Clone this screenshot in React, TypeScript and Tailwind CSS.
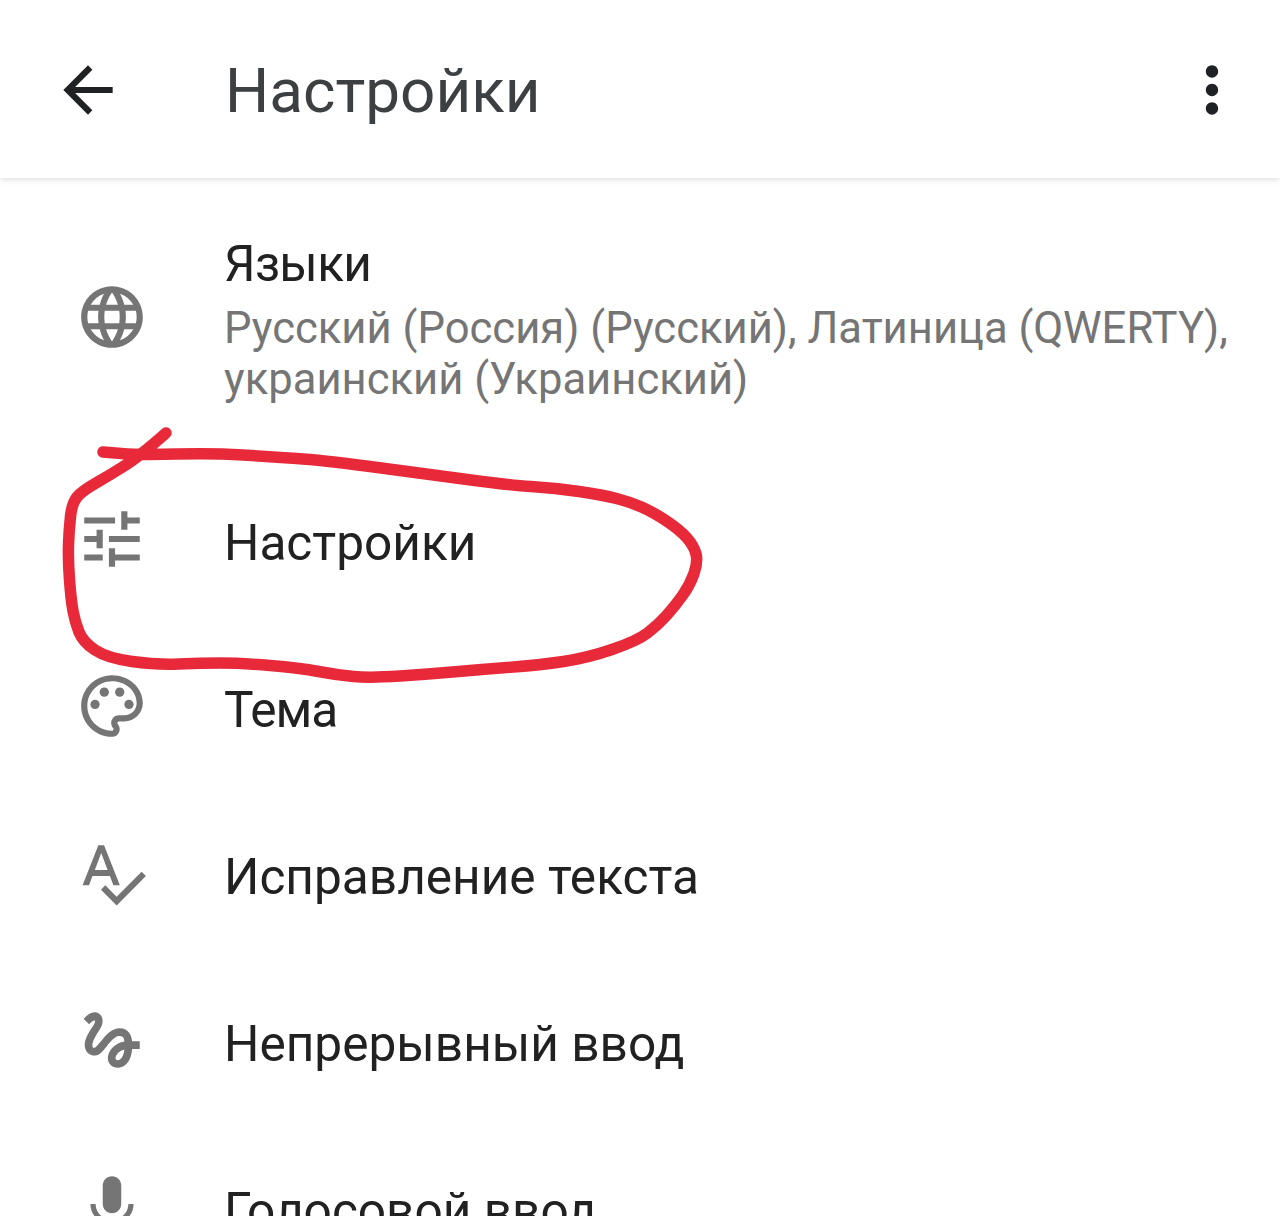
const ROBOTO = "font-['Roboto',sans-serif]";

function MaterialIcon({ d, className = "", children }: { d?: string; className?: string; children?: React.ReactNode }) {
  return (
    <svg viewBox="0 0 24 24" className={`h-[74px] w-[74px] shrink-0 ${className}`} fill="currentColor">
      {d && <path d={d} />}
      {children}
    </svg>
  );
}

const ICONS = {
  language:
    "M11.99 2C6.47 2 2 6.48 2 12s4.47 10 9.99 10C17.52 22 22 17.52 22 12S17.52 2 11.99 2zm6.93 6h-2.95c-.32-1.25-.78-2.45-1.38-3.56 1.84.63 3.37 1.91 4.33 3.56zM12 4.04c.83 1.2 1.48 2.53 1.91 3.96h-3.82c.43-1.43 1.08-2.76 1.91-3.96zM4.26 14C4.1 13.36 4 12.69 4 12s.1-1.36.26-2h3.38c-.08.66-.14 1.32-.14 2 0 .68.06 1.34.14 2H4.26zm.82 2h2.95c.32 1.25.78 2.45 1.38 3.56-1.84-.63-3.37-1.9-4.33-3.56zm2.95-8H5.08c.96-1.66 2.49-2.93 4.33-3.56C8.81 5.55 8.35 6.75 8.03 8zM12 19.96c-.83-1.2-1.48-2.53-1.91-3.96h3.82c-.43 1.43-1.08 2.76-1.91 3.96zM14.34 14H9.66c-.09-.66-.16-1.32-.16-2 0-.68.07-1.35.16-2h4.68c.09.65.16 1.32.16 2 0 .68-.07 1.34-.16 2zm.25 5.56c.6-1.11 1.06-2.31 1.38-3.56h2.95c-.96 1.65-2.49 2.93-4.33 3.56zM16.36 14c.08-.66.14-1.32.14-2 0-.68-.06-1.34-.14-2h3.38c.16.64.26 1.31.26 2s-.1 1.36-.26 2h-3.38z",
  tune: "M3 17v2h6v-2H3zM3 5v2h10V5H3zm10 16v-2h8v-2h-8v-2h-2v6h2zM7 9v2H3v2h4v2h2V9H7zm14 4v-2H11v2h10zm-6-4h2V7h4V5h-4V3h-2v6z",
  palette:
    "M12 22C6.49 22 2 17.51 2 12S6.49 2 12 2s10 4.04 10 9c0 3.31-2.69 6-6 6h-1.77c-.28 0-.5.22-.5.5 0 .12.05.23.13.33.41.47.64 1.06.64 1.67 0 1.38-1.12 2.5-2.5 2.5zm0-18c-4.41 0-8 3.59-8 8s3.59 8 8 8c.28 0 .5-.22.5-.5 0-.16-.08-.28-.14-.35-.41-.46-.63-1.05-.63-1.65 0-1.38 1.12-2.5 2.5-2.5H16c2.21 0 4-1.79 4-4 0-3.86-3.59-7-8-7z",
  spellcheck:
    "M12.45 16h2.09L9.43 3H7.57L2.46 16h2.09l1.12-3h5.64l1.14 3zm-6.02-5L8.5 5.48 10.57 11H6.43zm15.16.59l-8.09 8.09L9.83 16l-1.41 1.41 5.09 5.09L23 13l-1.41-1.41z",
  gesture:
    "M4.59 6.89c.7-.71 1.4-1.35 1.71-1.22.5.2 0 1.03-.3 1.52-.25.42-2.86 3.89-2.86 6.31 0 1.28.48 2.34 1.34 2.98.75.56 1.74.73 2.64.46 1.07-.31 1.95-1.4 3.06-2.77 1.21-1.49 2.83-3.44 4.08-3.44 1.63 0 1.65 1.01 1.76 1.79-3.78.64-5.38 3.67-5.38 5.37 0 1.7 1.44 3.09 3.21 3.09 1.63 0 4.29-1.33 4.69-6.1H21v-2.5h-2.47c-.15-1.65-1.09-4.2-4.03-4.2-2.25 0-4.18 1.91-4.94 2.84-.58.73-2.06 2.48-2.29 2.72-.25.3-.68.84-1.11.84-.45 0-.72-.83-.36-1.92.35-1.09 1.4-2.86 1.85-3.52.78-1.14 1.3-1.92 1.3-3.28C8.95 3.69 7.31 3 6.44 3 5.12 3 3.97 4 3.72 4.25c-.36.36-.66.66-.88.93l1.75 1.71zm9.29 11.66c-.31 0-.74-.26-.74-.72 0-.6.73-2.2 2.87-2.76-.3 2.69-1.43 3.48-2.13 3.48z",
  mic: "M12 14c1.66 0 2.99-1.34 2.99-3L15 5c0-1.66-1.34-3-3-3S9 3.34 9 5v6c0 1.66 1.34 3 3 3zm5.3-3c0 3-2.54 5.1-5.3 5.1S6.7 14 6.7 11H5c0 3.41 2.72 6.23 6 6.72V21h2v-3.28c3.28-.48 6-3.3 6-6.72h-1.7z",
};

// points traced off the marker stroke, smoothed through midpoints
const MARKER: [number, number][] = [
  [166, 433], [140, 456], [110, 475], [82, 491], [72, 503], [69, 530], [68, 560], [71, 600], [75, 622], [83, 642], [107, 658],
  [157, 665], [200, 663], [240, 663], [300, 668], [337, 675], [370, 678], [430, 674], [487, 669], [540, 665], [587, 658], [637, 641],
  [658, 625], [675, 606], [690, 585], [698, 562], [694, 546], [680, 530], [653, 512], [630, 502], [603, 495], [555, 488], [507, 485], [420, 473], [320, 460], [273, 457],
  [213, 453], [140, 455], [103, 452],
];

function markerPath() {
  let d = `M${MARKER[0][0]} ${MARKER[0][1]}`;
  for (let i = 1; i < MARKER.length - 1; i++) {
    const [x, y] = MARKER[i];
    const [nx, ny] = MARKER[i + 1];
    d += ` Q${x} ${y} ${(x + nx) / 2} ${(y + ny) / 2}`;
  }
  const [lx, ly] = MARKER[MARKER.length - 1];
  return `${d} L${lx} ${ly}`;
}

function Row({ title, icon, titleClass = "" }: { title: string; icon: React.ReactNode; titleClass?: string }) {
  return (
    <div className="flex h-[167px] shrink-0 items-center pl-[75px]">
      <div className="mb-[7px] flex">{icon}</div>
      <span className={`ml-[75px] text-[49.6px] leading-[56px] text-[#212121] ${titleClass}`}>{title}</span>
    </div>
  );
}

export default function App() {
  return (
    <div className={`relative h-[1216px] w-[1280px] overflow-hidden bg-white ${ROBOTO}`}>
      {/* Toolbar */}
      <header className="relative flex h-[178px] items-center bg-white pl-[51px] pr-[31px] pt-[2px] shadow-[0_2px_6px_rgba(0,0,0,0.12)]">
        <MaterialIcon d="M20 11H7.83l5.59-5.59L12 4l-8 8 8 8 1.41-1.41L7.83 13H20v-2z" className="text-[#202124]" />
        <h1 className="ml-[100px] flex-1 text-[62px] font-normal text-[#3c4043]">Настройки</h1>
        <MaterialIcon
          d="M12 8c1.1 0 2-.9 2-2s-.9-2-2-2-2 .9-2 2 .9 2 2 2zm0 2c-1.1 0-2 .9-2 2s.9 2 2 2 2-.9 2-2-.9-2-2-2zm0 6c-1.1 0-2 .9-2 2s.9 2 2 2 2-.9 2-2-.9-2-2-2z"
          className="text-[#202124]"
        />
      </header>

      {/* Languages row */}
      <div className="flex h-[281px] items-center pl-[75px] pb-[4px]">
        <MaterialIcon d={ICONS.language} className="text-[#757575]" />
        <div className="ml-[75px] flex flex-col pt-[6px]">
          <span className="text-[49.6px] leading-[60px] tracking-[-0.7px] text-[#212121]">Языки</span>
          <span className="mt-[9px] text-[43.6px] leading-[51px] text-[#757575]">
            Русский (Россия) (Русский), Латиница (QWERTY),
            <br />
            украинский (Украинский)
          </span>
        </div>
      </div>

      <Row title="Настройки" icon={<MaterialIcon d={ICONS.tune} className="text-[#757575]" />} />
      <Row
        title="Тема"
        titleClass="tracking-[-1px]"
        icon={
          <MaterialIcon d={ICONS.palette} className="text-[#757575]">
            <circle cx="6.5" cy="11.5" r="1.5" />
            <circle cx="9.5" cy="7.5" r="1.5" />
            <circle cx="14.5" cy="7.5" r="1.5" />
            <circle cx="17.5" cy="11.5" r="1.5" />
          </MaterialIcon>
        }
      />
      <Row title="Исправление текста" icon={<MaterialIcon d={ICONS.spellcheck} className="text-[#757575]" />} />
      <Row title="Непрерывный ввод" icon={<MaterialIcon d={ICONS.gesture} className="text-[#757575]" />} />
      <Row title="Голосовой ввод" icon={<MaterialIcon d={ICONS.mic} className="text-[#757575]" />} />

      {/* Hand-drawn red circle around the row */}
      <svg className="absolute left-0 top-0 h-[1216px] w-[1280px]" viewBox="0 0 1280 1216" fill="none">
        <path d={markerPath()} stroke="#e7293a" strokeWidth="11.5" strokeLinecap="round" strokeLinejoin="round" />
      </svg>
    </div>
  );
}
